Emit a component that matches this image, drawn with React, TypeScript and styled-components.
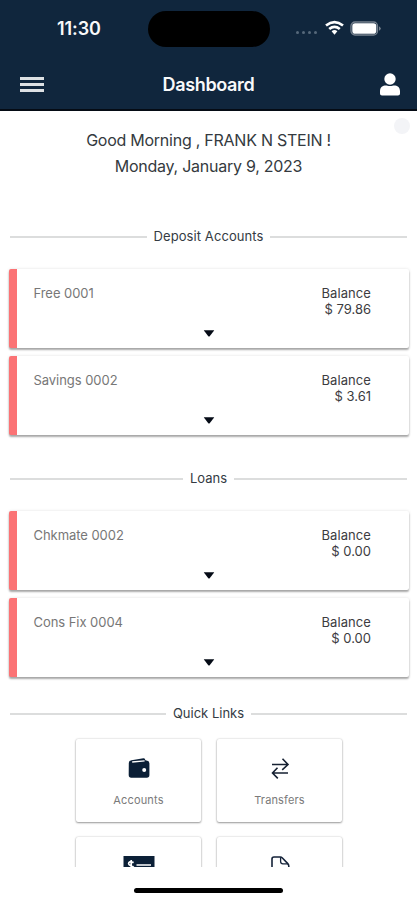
import React from "react";
import styled, { createGlobalStyle } from "styled-components";

const navy = "#10263d";

const GlobalStyle = createGlobalStyle`
  * { box-sizing: border-box; }
  body { margin: 0; background: #fff; font-family: Inter, "Liberation Sans", sans-serif; }
`;

const Screen = styled.div`
  width: 417px;
  height: 900px;
  display: flex;
  flex-direction: column;
  overflow: hidden;
  background: #fff;
`;

const Header = styled.header`
  height: 111px;
  flex: none;
  background: ${navy};
  border-bottom: 2px solid #050b14;
  color: #f8f9fa;
`;

const StatusBar = styled.div`
  height: 58px;
  display: grid;
  grid-template-columns: 148px 122px 1fr;
  padding-top: 11px;
`;

const Clock = styled.div`
  padding-left: 57px;
  font-size: 18px;
  line-height: 36px;
  font-weight: 600;
  letter-spacing: -0.1px;
`;

const Island = styled.div`
  height: 36px;
  border-radius: 18px;
  background: #000;
`;

const StatusIcons = styled.div`
  display: flex;
  height: 34px;
  align-items: center;
  padding-left: 26px;
`;

const Dots = styled.div`
  display: flex;
  gap: 3px;
  margin: 9px 8px 0 0;
`;

const Dot = styled.i`
  width: 3px;
  height: 3px;
  border-radius: 50%;
  background: #56687a;
`;

const NavBar = styled.nav`
  height: 53px;
  display: grid;
  grid-template-columns: 80px 1fr 80px;
  align-items: center;
`;

const MenuButton = styled.button`
  display: flex;
  flex-direction: column;
  gap: 3px;
  width: 24px;
  margin: 0 0 0 20px;
  padding: 0;
  border: 0;
  background: none;
`;

const MenuLine = styled.i`
  height: 3px;
  background: #dde1e4;
`;

const Title = styled.h1`
  margin: 0;
  text-align: center;
  font-size: 18px;
  line-height: 24px;
  font-weight: 600;
  letter-spacing: -0.35px;
`;

const ProfileButton = styled.button`
  display: flex;
  justify-self: end;
  margin: 0 17px 0 0;
  padding: 0;
  border: 0;
  background: none;
`;

const Content = styled.main`
  height: 756px;
  flex: none;
  overflow: hidden;
  position: relative;
`;

const FloatingDot = styled.i`
  position: absolute;
  right: 7px;
  top: 7px;
  width: 16px;
  height: 16px;
  border-radius: 50%;
  background: #f3f4f7;
`;

const Greeting = styled.div`
  height: 112px;
  padding-top: 16px;
  text-align: center;
  color: #343a40;
  font-size: 16px;
  line-height: 26px;
`;

const GreetingLine = styled.div<{ $spacing: number }>`
  letter-spacing: ${(p) => p.$spacing}px;
`;

const Divider = styled.h2<{ $gap: number; $spacing: number }>`
  display: flex;
  align-items: center;
  gap: 7px;
  height: 26px;
  margin: 0 10px ${(p) => p.$gap}px;
  color: #343b43;
  font-size: 13px;
  font-weight: 400;
  letter-spacing: ${(p) => p.$spacing}px;
  &::before, &::after {
    content: "";
    flex: 1;
    height: 2px;
    margin-top: 2px;
    background: #dcdddd;
  }
`;

const CardList = styled.section<{ $bottom: number }>`
  display: flex;
  flex-direction: column;
  gap: 8px;
  padding: 0 8px 0 9px;
  margin-bottom: ${(p) => p.$bottom}px;
`;

const Card = styled.article`
  height: 79px;
  border-left: 8px solid #fb7375;
  border-radius: 2px;
  background: #fff;
  box-shadow: 0 2px 2px rgba(0, 0, 0, 0.32), 0 0 3px rgba(0, 0, 0, 0.12);
  font-size: 13px;
  line-height: 16px;
`;

const CardTop = styled.div`
  display: flex;
  justify-content: space-between;
  height: 60px;
  padding: 16px 38px 0 16.5px;
`;

const AccountName = styled.div`
  color: #777;
  letter-spacing: -0.05px;
`;

const Balance = styled.div`
  color: #3c3c3f;
  text-align: right;
`;

const BalanceLabel = styled.div`
  letter-spacing: 0.08px;
`;

const Caret = styled.svg`
  display: block;
  margin: 1px auto 0;
  transform: translateX(-4.5px);
`;

const Tiles = styled.section`
  display: grid;
  grid-template-columns: 125px 125px;
  grid-auto-rows: 83px;
  gap: 15px 16px;
  justify-content: center;
  padding-left: 1px;
`;

const Tile = styled.button`
  display: flex;
  flex-direction: column;
  align-items: center;
  padding: 17px 0 0;
  border: 0;
  border-radius: 2px;
  background: #fff;
  box-shadow: 0 1px 2px rgba(0, 0, 0, 0.36), 0 0 2px rgba(0, 0, 0, 0.22);
  color: #7a7a7a;
  font: 11px/14px Inter, "Liberation Sans", sans-serif;
  letter-spacing: 0.15px;
`;

const TileIcon = styled.svg`
  flex: none;
  margin-bottom: 12px;
`;

const HomeArea = styled.footer`
  flex: 1;
  padding-top: 20.5px;
`;

const HomeIndicator = styled.div`
  width: 149px;
  height: 5px;
  margin: 0 auto;
  border-radius: 3px;
  background: #000;
`;

const WifiIcon = () => (
  <svg width="19" height="16" viewBox="0 0 19 16" fill="none" stroke="#fff" strokeWidth="2.7">
    <path d="M1 5.5Q9.5-1.2 18 5.5" />
    <path d="M4.2 9Q9.5 4.7 14.8 9" />
    <path d="M6.6 11.2Q9.5 8.8 12.4 11.2L9.5 14.8Z" fill="#fff" stroke="none" />
  </svg>
);

const BatteryIcon = () => (
  <svg width="32" height="15" viewBox="0 0 32 15">
    <rect x="1" y="1" width="26.5" height="13" rx="4" fill="none" stroke="#77828f" strokeWidth="1.3" />
    <rect x="2.3" y="2.3" width="24" height="10.4" rx="2.8" fill="#fff" />
    <path d="M29 5.2Q32.5 7.5 29 9.8Z" fill="#77828f" />
  </svg>
);

const BatterySlot = styled.span`
  display: flex;
  margin-left: 6px;
`;

const PersonIcon = () => (
  <svg width="20" height="23" viewBox="0 0 20 23" fill="#fff">
    <circle cx="10" cy="6" r="5.7" />
    <path d="M0 20.5V18c0-4 2.8-5.6 5.8-5.6 1.2 0 2.1.7 4.2.7s3-.7 4.2-.7c3 0 5.8 1.6 5.8 5.6v2.5c0 1.3-.8 2-2 2H2c-1.2 0-2-.7-2-2Z" />
  </svg>
);

const AccountsIcon = () => (
  <TileIcon width="24" height="25" viewBox="0 0 24 25">
    <path d="M1.8 7.2Q1.6 4.7 4.5 4.3L16.4 2.2Q18.2 2 18.4 4.2L20.3 4.8Q22.4 5.1 22.4 7.5V19Q22.4 21.7 19.8 21.7H4.2Q1.7 21.7 1.7 19Z" fill="#0b1f36" />
    <path d="M5.2 6L17.6 4.9" stroke="#fff" strokeWidth="1.4" />
    <circle cx="17.2" cy="14" r="2" fill="#fff" />
  </TileIcon>
);

const TransfersIcon = () => (
  <TileIcon width="24" height="25" viewBox="0 0 24 25" fill="none" stroke="#162132" strokeWidth="1.6">
    <path d="M4 8.5H20M14.5 2.8L20 8.5L14.2 13.8" />
    <path d="M20 17H4.5M9.5 11.7L4.5 17L9.8 22.4" />
  </TileIcon>
);

const CheckIcon = () => (
  <TileIcon width="32" height="25" viewBox="0 0 32 25">
    <rect x="0.5" y="2" width="31" height="22" fill="#0b1f36" />
    <path d="M10.7 8.5Q5.6 6.7 5.6 9.8C5.6 12.3 11 11.5 11 14.5Q10 17.5 5.3 15.5M8.2 6V18" fill="none" stroke="#fff" strokeWidth="1.7" />
    <path d="M13.5 11H28M13.5 16H28" stroke="#fff" strokeWidth="1.7" />
  </TileIcon>
);

const DocumentIcon = () => (
  <TileIcon width="24" height="25" viewBox="0 0 24 25" fill="none" stroke="#142239" strokeWidth="1.6">
    <path d="M4 24V5Q4 3 6 3H12.2Q13.4 3 14.4 4L19.8 9.6Q20.8 10.7 20.8 12.2V24Z" />
    <path d="M12.6 3.2V7.4Q12.6 9.8 15 9.8H20" strokeWidth="1.3" />
  </TileIcon>
);

const AccountCard = ({ name, balance }: { name: string; balance: string }) => (
  <Card>
    <CardTop>
      <AccountName>{name}</AccountName>
      <Balance>
        <BalanceLabel>Balance</BalanceLabel>
        <div>{balance}</div>
      </Balance>
    </CardTop>
    <Caret width="11" height="7" viewBox="0 0 11 7">
      <path d="M.2.2H10.8L6.2 6.2Q5.5 7 4.8 6.2Z" fill="#050b16" />
    </Caret>
  </Card>
);

export default function App() {
  return (
    <>
      <GlobalStyle />
      <Screen>
        <Header>
          <StatusBar>
            <Clock>11:30</Clock>
            <Island />
            <StatusIcons>
              <Dots><Dot /><Dot /><Dot /><Dot /></Dots>
              <WifiIcon />
              <BatterySlot><BatteryIcon /></BatterySlot>
            </StatusIcons>
          </StatusBar>
          <NavBar>
            <MenuButton aria-label="Menu"><MenuLine /><MenuLine /><MenuLine /></MenuButton>
            <Title>Dashboard</Title>
            <ProfileButton aria-label="Profile"><PersonIcon /></ProfileButton>
          </NavBar>
        </Header>
        <Content>
          <FloatingDot />
          <Greeting>
            <GreetingLine $spacing={-0.25}>Good Morning , FRANK N STEIN !</GreetingLine>
            <GreetingLine $spacing={-0.26}>Monday, January 9, 2023</GreetingLine>
          </Greeting>
          <Divider $gap={20} $spacing={0.08}>Deposit Accounts</Divider>
          <CardList $bottom={30}>
            <AccountCard name="Free 0001" balance="$ 79.86" />
            <AccountCard name="Savings 0002" balance="$ 3.61" />
          </CardList>
          <Divider $gap={20} $spacing={0}>Loans</Divider>
          <CardList $bottom={23}>
            <AccountCard name="Chkmate 0002" balance="$ 0.00" />
            <AccountCard name="Cons Fix 0004" balance="$ 0.00" />
          </CardList>
          <Divider $gap={13} $spacing={0}>Quick Links</Divider>
          <Tiles>
            <Tile><AccountsIcon />Accounts</Tile>
            <Tile><TransfersIcon />Transfers</Tile>
            <Tile aria-label="Checks"><CheckIcon /></Tile>
            <Tile aria-label="Documents"><DocumentIcon /></Tile>
          </Tiles>
        </Content>
        <HomeArea><HomeIndicator /></HomeArea>
      </Screen>
    </>
  );
}
